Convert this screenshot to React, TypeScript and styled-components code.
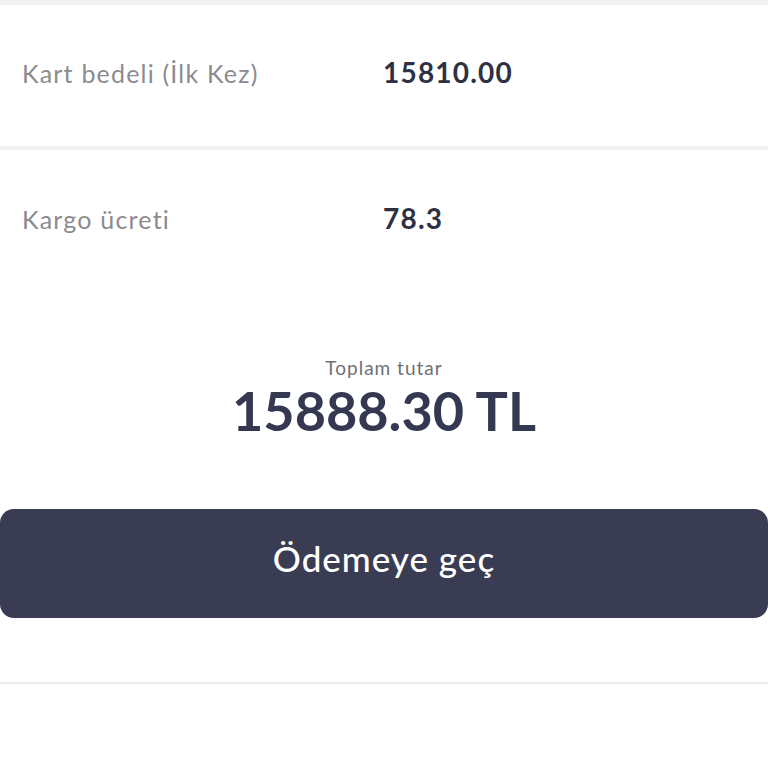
import type { FC } from "react";
import styled, { createGlobalStyle } from "styled-components";

const GlobalStyle = createGlobalStyle`
  html, body {
    margin: 0;
    padding: 0;
    background: #ffffff;
  }
  body {
    font-family: Lato, "Open Sans", sans-serif;
  }
`;

interface Line {
  label: string;
  value: string;
}

const lines: Line[] = [
  { label: "Kart bedeli (İlk Kez)", value: "15810.00" },
  { label: "Kargo ücreti", value: "78.3" },
];

const App: FC = () => {
  return (
    <>
      <GlobalStyle />
      <Page>
        <TopBand />
        {lines.map((line, i) => (
          <Row key={i} $last={i === lines.length - 1}>
            <Label>{line.label}</Label>
            <Value>{line.value}</Value>
          </Row>
        ))}
        <Total>
          <TotalLabel>Toplam tutar</TotalLabel>
          <TotalAmount>15888.30 TL</TotalAmount>
        </Total>
        <PayButton type="button">Ödemeye geç</PayButton>
        <Footer />
      </Page>
    </>
  );
};

export default App;

const Page = styled.div`
  width: 768px;
  height: 768px;
  overflow: hidden;
  display: flex;
  flex-direction: column;
  background: #ffffff;
`;

const TopBand = styled.div`
  height: 5px;
  background: #f2f2f3;
  flex-shrink: 0;
`;

const Row = styled.div<{ $last?: boolean }>`
  display: grid;
  grid-template-columns: 361px 1fr;
  align-items: center;
  height: ${({ $last }) => ($last ? "140px" : "145px")};
  padding-left: 22px;
  padding-bottom: ${({ $last }) => ($last ? "4px" : "8px")};
  box-sizing: border-box;
  border-bottom: ${({ $last }) => ($last ? "none" : "4px solid #f2f2f3")};
  flex-shrink: 0;
`;

const Label = styled.span`
  font-size: 25px;
  color: #8b8b90;
  letter-spacing: 1.2px;
  padding-top: 2px;
`;

const Value = styled.span`
  font-size: 28px;
  font-weight: 700;
  color: #2e3143;
  letter-spacing: 1.2px;
`;

const Total = styled.div`
  display: flex;
  flex-direction: column;
  align-items: center;
  padding-top: 66px;
`;

const TotalLabel = styled.span`
  font-size: 19px;
  color: #6f7078;
  letter-spacing: 1px;
`;

const TotalAmount = styled.span`
  font-size: 54px;
  font-weight: 700;
  color: #343850;
  line-height: 1;
  margin-top: 5px;
`;

const PayButton = styled.button`
  margin-top: 71px;
  height: 109px;
  width: 768px;
  padding: 0 0 12px;
  border: none;
  border-radius: 14px;
  background: #393c52;
  color: #ffffff;
  font-family: Lato, "Open Sans", sans-serif;
  font-size: 35px;
  font-weight: 500;
  letter-spacing: 1px;
  flex-shrink: 0;
  cursor: pointer;
`;

const Footer = styled.div`
  margin-top: 64px;
  height: 2px;
  background: #ececee;
  flex-shrink: 0;
`;
